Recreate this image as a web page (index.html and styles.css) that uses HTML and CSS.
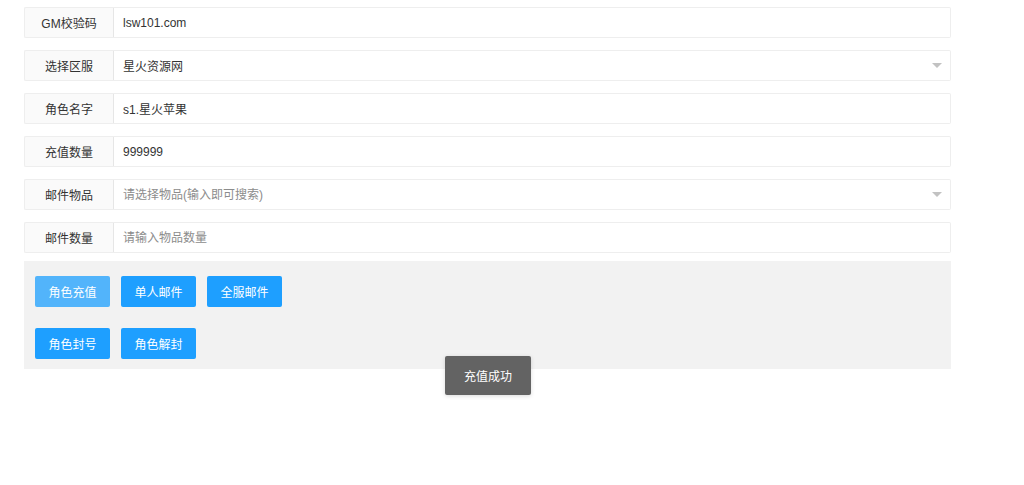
FILE: index.html
```html
<!DOCTYPE html>
<html lang="zh-CN">
<head>
  <meta charset="UTF-8">
  <meta name="viewport" content="width=device-width, initial-scale=1.0">
  <title>GM后台</title>
  <link rel="stylesheet" href="styles.css">
</head>
<body>
  <div class="wrap">
    <form class="gm-form">
      <div class="form-item">
        <label class="form-label">GM校验码</label>
        <input class="form-input" type="text" value="lsw101.com">
      </div>
      <div class="form-item">
        <label class="form-label">选择区服</label>
        <div class="form-select">
          <input class="form-input" type="text" value="星火资源网" readonly>
          <i class="select-arrow"></i>
        </div>
      </div>
      <div class="form-item">
        <label class="form-label">角色名字</label>
        <input class="form-input" type="text" value="s1.星火苹果">
      </div>
      <div class="form-item">
        <label class="form-label">充值数量</label>
        <input class="form-input" type="text" value="999999">
      </div>
      <div class="form-item">
        <label class="form-label">邮件物品</label>
        <div class="form-select">
          <input class="form-input" type="text" placeholder="请选择物品(输入即可搜索)">
          <i class="select-arrow"></i>
        </div>
      </div>
      <div class="form-item">
        <label class="form-label">邮件数量</label>
        <input class="form-input" type="text" placeholder="请输入物品数量">
      </div>

      <div class="btn-panel">
        <div class="btn-row">
          <button type="button" class="btn btn-light">角色充值</button>
          <button type="button" class="btn">单人邮件</button>
          <button type="button" class="btn">全服邮件</button>
        </div>
        <div class="btn-row">
          <button type="button" class="btn">角色封号</button>
          <button type="button" class="btn">角色解封</button>
        </div>
      </div>
    </form>
  </div>

  <div class="msg">充值成功</div>
</body>
</html>
```

FILE: styles.css
```css
body {
  margin: 0;
  padding: 0;
  background-color: #fff;
  font-family: "Liberation Sans", "Noto Sans CJK SC", sans-serif;
  font-size: 12px;
  color: #333;
}
.wrap {
  width: 927px;
  padding: 7px 0 0 24px;
}
.form-item {
  display: flex;
  height: 31px;
  margin-bottom: 12px;
}
.form-label {
  width: 88px;
  flex-shrink: 0;
  display: flex;
  align-items: center;
  justify-content: center;
  background-color: #fafafa;
  border: 1px solid #eee;
  border-right: 1px solid #e6e6e6;
  border-radius: 2px 0 0 2px;
  color: #333;
}
.form-input {
  flex: 1;
  min-width: 0;
  height: 31px;
  box-sizing: border-box;
  margin: 0;
  padding: 0 9px;
  border: 1px solid #eee;
  border-left: none;
  border-radius: 0 2px 2px 0;
  font-family: inherit;
  font-size: 12px;
  color: #333;
  outline: none;
  background: #fff;
}
.form-input::placeholder {
  color: #8c8c8c;
}
.form-select {
  flex: 1;
  display: flex;
  position: relative;
}
.select-arrow {
  position: absolute;
  right: 9px;
  top: 13px;
  width: 0;
  height: 0;
  border-left: 5px solid transparent;
  border-right: 5px solid transparent;
  border-top: 5px solid #c2c2c2;
}
.btn-panel {
  margin-top: -4px;
  padding: 15px 11px 10px;
  background-color: #f2f2f2;
}
.btn-row {
  display: flex;
  gap: 11px;
  margin-bottom: 21px;
}
.btn-row:last-child {
  margin-bottom: 0;
}
.btn {
  height: 31px;
  width: 75px;
  padding: 0;
  border: none;
  border-radius: 2px;
  background-color: #1e9fff;
  color: #fff;
  font-family: inherit;
  font-size: 12px;
  cursor: pointer;
}
.btn-light {
  background-color: #52b4fb;
}
.msg {
  position: absolute;
  left: 445px;
  top: 356px;
  width: 86px;
  height: 39px;
  display: flex;
  align-items: center;
  justify-content: center;
  background-color: #636363;
  border-radius: 2px;
  color: #fff;
  font-size: 12px;
  box-shadow: 0 1px 4px rgba(0, 0, 0, 0.15);
}
```
